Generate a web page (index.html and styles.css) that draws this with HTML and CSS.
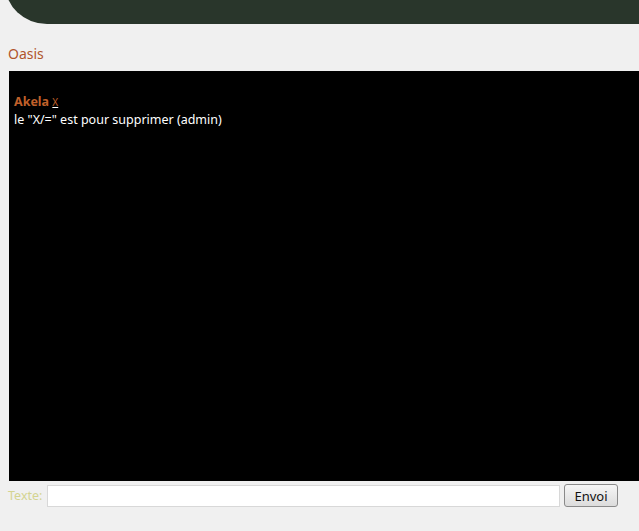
FILE: index.html
```html
<!DOCTYPE html>
<html>
<head>
<meta charset="utf-8">
<link rel="stylesheet" href="styles.css">
</head>
<body>
<div class="page">
  <div class="topbar"></div>
  <div class="title">Oasis</div>
  <div class="chat">
    <div class="msg">
      <div class="author"><span class="name">Akela</span> <span class="del">X</span></div>
      <div class="text">le "X/=" est pour supprimer (admin)</div>
    </div>
  </div>
  <form class="form">
    <label class="label">Texte:</label>
    <input class="input" type="text">
    <button class="btn" type="button">Envoi</button>
  </form>
</div>
</body>
</html>
```
FILE: styles.css
```css
html, body {
  margin: 0;
  padding: 0;
  background: #f0f0f0;
  overflow: hidden;
}
.page {
  width: 639px;
  height: 531px;
  overflow: hidden;
  font-family: "Noto Sans", "DejaVu Sans", sans-serif;
  font-size: 13px;
}
.topbar {
  margin-top: -16px;
  margin-left: 5px;
  height: 40px;
  background: #29362b;
  border-bottom-left-radius: 42px 40px;
}
.title {
  margin: 20px 0 0 8px;
  color: #b0552c;
  font-size: 14px;
  line-height: 20px;
}
.chat {
  margin: 7px 0 0 9px;
  width: 640px;
  height: 410px;
  background: #000;
  box-sizing: border-box;
  padding: 22px 0 0 5px;
  color: #fff;
  font-size: 12.5px;
  line-height: 17px;
}
.name {
  color: #c0602a;
  font-weight: bold;
}
.del {
  color: #c0602a;
  text-decoration: underline;
  text-decoration-color: #fff;
  font-size: 10px;
}
.form {
  display: flex;
  align-items: center;
  margin: 3px 0 0 8px;
}
.label {
  color: #d4d490;
  font-size: 12.5px;
  width: 39px;
}
.input {
  width: 513px;
  height: 22px;
  box-sizing: border-box;
  border: 1px solid #d8d8d8;
  background: #fff;
  margin: 0;
  padding: 0 3px;
}
.btn {
  margin-left: 4px;
  width: 54px;
  height: 23px;
  border: 1px solid #8a8a8a;
  border-radius: 3px;
  background: linear-gradient(#f6f6f6, #dcdcdc);
  font-family: "Noto Sans", "DejaVu Sans", sans-serif;
  font-size: 13px;
  color: #111;
  padding: 0;
}
```
